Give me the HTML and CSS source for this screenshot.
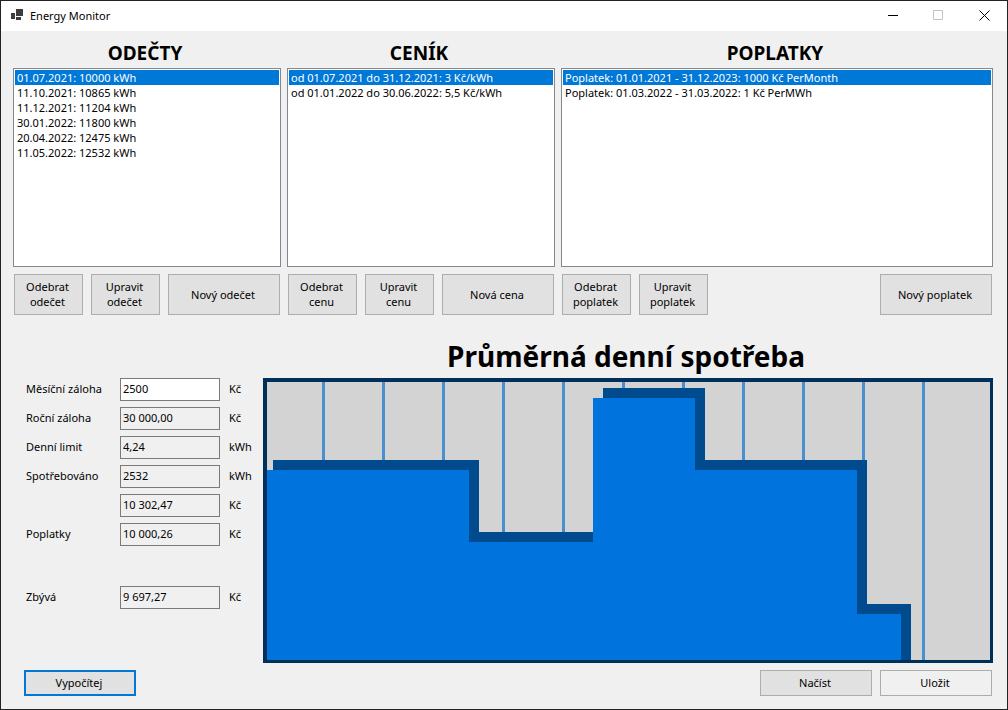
FILE: index.html
```html
<!DOCTYPE html>
<html lang="cs">
<head>
<meta charset="utf-8">
<title>Energy Monitor</title>
<link rel="stylesheet" href="styles.css">
</head>
<body>
<div class="window">
  <header class="titlebar">
    <svg class="app-icon" viewBox="0 0 12 12" aria-hidden="true">
      <path fill="#3c3c3c" d="M5 0h7v7H5zM0 4h4v6H0zM5 8h5v3H5z"/>
    </svg>
    <h1 class="app-title">Energy Monitor</h1>
    <div class="window-controls">
      <button class="control" aria-label="Minimalizovat"><svg viewBox="0 0 11 11"><path d="M1 5.5h10"/></svg></button>
      <button class="control" aria-label="Maximalizovat" disabled><svg viewBox="0 0 11 11"><path d="M.5.5h9v9h-9z"/></svg></button>
      <button class="control" aria-label="Zavřít"><svg viewBox="0 0 11 11"><path d="M.5.5l10 10M10.5.5l-10 10"/></svg></button>
    </div>
  </header>

  <main class="content">
    <div class="lists">
      <section class="panel">
        <h2 class="panel-title"><label for="readings">ODEČTY</label></h2>
        <select class="listbox" id="readings" size="13">
          <option selected>01.07.2021: 10000 kWh</option>
          <option>11.10.2021: 10865 kWh</option>
          <option>11.12.2021: 11204 kWh</option>
          <option>30.01.2022: 11800 kWh</option>
          <option>20.04.2022: 12475 kWh</option>
          <option>11.05.2022: 12532 kWh</option>
        </select>
        <div class="actions">
          <button class="button small">Odebrat odečet</button>
          <button class="button small">Upravit odečet</button>
          <button class="button wide">Nový odečet</button>
        </div>
      </section>

      <section class="panel">
        <h2 class="panel-title"><label for="prices">CENÍK</label></h2>
        <select class="listbox" id="prices" size="13">
          <option selected>od 01.07.2021 do 31.12.2021: 3 Kč/kWh</option>
          <option>od 01.01.2022 do 30.06.2022: 5,5 Kč/kWh</option>
        </select>
        <div class="actions">
          <button class="button small">Odebrat cenu</button>
          <button class="button small">Upravit cenu</button>
          <button class="button wide">Nová cena</button>
        </div>
      </section>

      <section class="panel">
        <h2 class="panel-title"><label for="fees">POPLATKY</label></h2>
        <select class="listbox" id="fees" size="13">
          <option selected>Poplatek: 01.01.2021 - 31.12.2023: 1000 Kč PerMonth</option>
          <option>Poplatek: 01.03.2022 - 31.03.2022: 1 Kč PerMWh</option>
        </select>
        <div class="actions">
          <button class="button small">Odebrat poplatek</button>
          <button class="button small">Upravit poplatek</button>
          <button class="button wide">Nový poplatek</button>
        </div>
      </section>
    </div>

    <div class="summary">
      <h2 class="chart-title">Průměrná denní spotřeba</h2>
      <form class="form">
        <div class="row"><label for="monthly">Měsíční záloha</label><input class="field" id="monthly" value="2500"><span>Kč</span></div>
        <div class="row"><label for="yearly">Roční záloha</label><input class="field" id="yearly" value="30 000,00" readonly><span>Kč</span></div>
        <div class="row"><label for="limit">Denní limit</label><input class="field" id="limit" value="4,24" readonly><span>kWh</span></div>
        <div class="row"><label for="used">Spotřebováno</label><input class="field" id="used" value="2532" readonly><span>kWh</span></div>
        <div class="row cost"><input class="field" aria-label="Spotřebováno v Kč" value="10 302,47" readonly><span>Kč</span></div>
        <div class="row"><label for="fee-total">Poplatky</label><input class="field" id="fee-total" value="10 000,26" readonly><span>Kč</span></div>
        <div class="row total"><label for="rest">Zbývá</label><input class="field" id="rest" value="9 697,27" readonly><span>Kč</span></div>
      </form>
      <svg class="chart" viewBox="0 0 723 278" preserveAspectRatio="none" role="img" aria-label="Průměrná denní spotřeba">
        <path class="grid-lines" d="M55 0h3v278h-3zM115 0h3v278h-3zM175 0h3v278h-3zM235 0h3v278h-3zM295 0h3v278h-3zM355 0h3v278h-3zM415 0h3v278h-3zM475 0h3v278h-3zM535 0h3v278h-3zM595 0h3v278h-3zM655 0h3v278h-3z"/>
        <path class="shadow" d="M6 78H212V150H326V278H6zM336 6H438V78H600V222H644V278H336z"/>
        <path class="area" d="M0 88H202V160H326V16H428V88H590V232H634V278H0z"/>
      </svg>
    </div>

    <footer class="footer">
      <button class="button wide default">Vypočítej</button>
      <button class="button wide load">Načíst</button>
      <button class="button wide plain">Uložit</button>
    </footer>
  </main>
</div>
</body>
</html>
```
FILE: styles.css
```css
* { box-sizing: border-box; }

body {
  margin: 0;
  font: 11px/15px "Noto Sans", "Open Sans", sans-serif;
  color: #000;
  background: #f0f0f0;
}

.window {
  display: flex;
  flex-direction: column;
  min-height: 100vh;
  border: 1px solid #222;
}

.titlebar {
  display: flex;
  align-items: center;
  height: 30px;
  padding: 0 0 2px 10px;
  background: #fff;
}
.app-icon { width: 12px; height: 12px; }
.app-title { margin: 0 auto 0 7px; font-size: 11px; font-weight: 400; }
.window-controls { display: flex; }
.control {
  display: flex;
  align-items: center;
  justify-content: center;
  width: 46px;
  height: 27px;
  padding: 0;
  border: 0;
  background: none;
}
.control svg { width: 11px; height: 11px; fill: none; stroke: #000; stroke-width: 1; }
.control:disabled svg { stroke: #c4c4c4; }

.content {
  display: flex;
  flex: 1;
  flex-direction: column;
  padding: 10px 14px 13px 12px;
}

.lists { display: grid; grid-template-columns: 268px 268px 1fr; gap: 6px; }
.panel { display: flex; flex-direction: column; }
.panel-title {
  margin: 0 0 3px;
  padding-right: 4px;
  font-size: 19px;
  line-height: 24px;
  text-align: center;
}

.listbox {
  height: 199px;
  padding: 1px;
  border: 1px solid #828790;
  border-radius: 0;
  outline: 0;
  overflow: hidden;
  font: inherit;
  color: #000;
  background: #fff;
}
.listbox option {
  height: 15px;
  min-height: 15px;
  padding: 0 2px;
  line-height: 15px;
}
.listbox option:checked {
  color: #fff;
  background: #0078d7 linear-gradient(#0078d7, #0078d7);
}

.actions { display: flex; gap: 8px; margin-top: 7px; padding: 0 1px; }
.button {
  padding: 0 7px 1px 5px;
  border: 1px solid #adadad;
  border-radius: 0;
  font: inherit;
  color: #000;
  background: #e1e1e1;
}
.small { width: 69px; height: 41px; }
.wide { width: 112px; }
.actions .wide { margin-left: auto; }

.summary {
  display: grid;
  flex: 1;
  grid-template-columns: 250px 1fr;
  grid-template-rows: auto 1fr;
  margin-top: 23px;
}
.chart-title {
  grid-column: 2;
  margin: 0 0 4px;
  padding-right: 4px;
  font-size: 28px;
  line-height: 36px;
  text-align: center;
}
.form { grid-column: 1; }
.row {
  display: grid;
  grid-template-columns: 94px 100px 1fr;
  align-items: center;
  margin-bottom: 6px;
  padding-left: 13px;
}
.row label, .row span { padding-bottom: 2px; }
.row span { padding-left: 9px; }
.cost .field { grid-column: 2; }
.total { margin-top: 40px; }
.field {
  width: 100%;
  height: 23px;
  padding: 0 2px 2px;
  border: 1px solid #7a7a7a;
  border-radius: 0;
  font: inherit;
  color: #000;
  background: #fff;
}
.field:read-only { background: #f0f0f0; }

.chart {
  grid-column: 2;
  width: 100%;
  height: 100%;
  min-height: 285px;
  border: solid #00305a;
  border-width: 4px 3px 3px 4px;
  background: #d3d3d3;
}
.grid-lines { fill: #4a90cf; }
.shadow { fill: #004b8d; }
.area { fill: #0074dc; }

.footer { display: flex; gap: 8px; margin-top: 7px; padding: 0 1px 0 11px; }
.footer .button { height: 26px; }
.default { border: 2px solid #0078d7; }
.load { margin-left: auto; }
.plain { background: #f0f0f0; }
```
